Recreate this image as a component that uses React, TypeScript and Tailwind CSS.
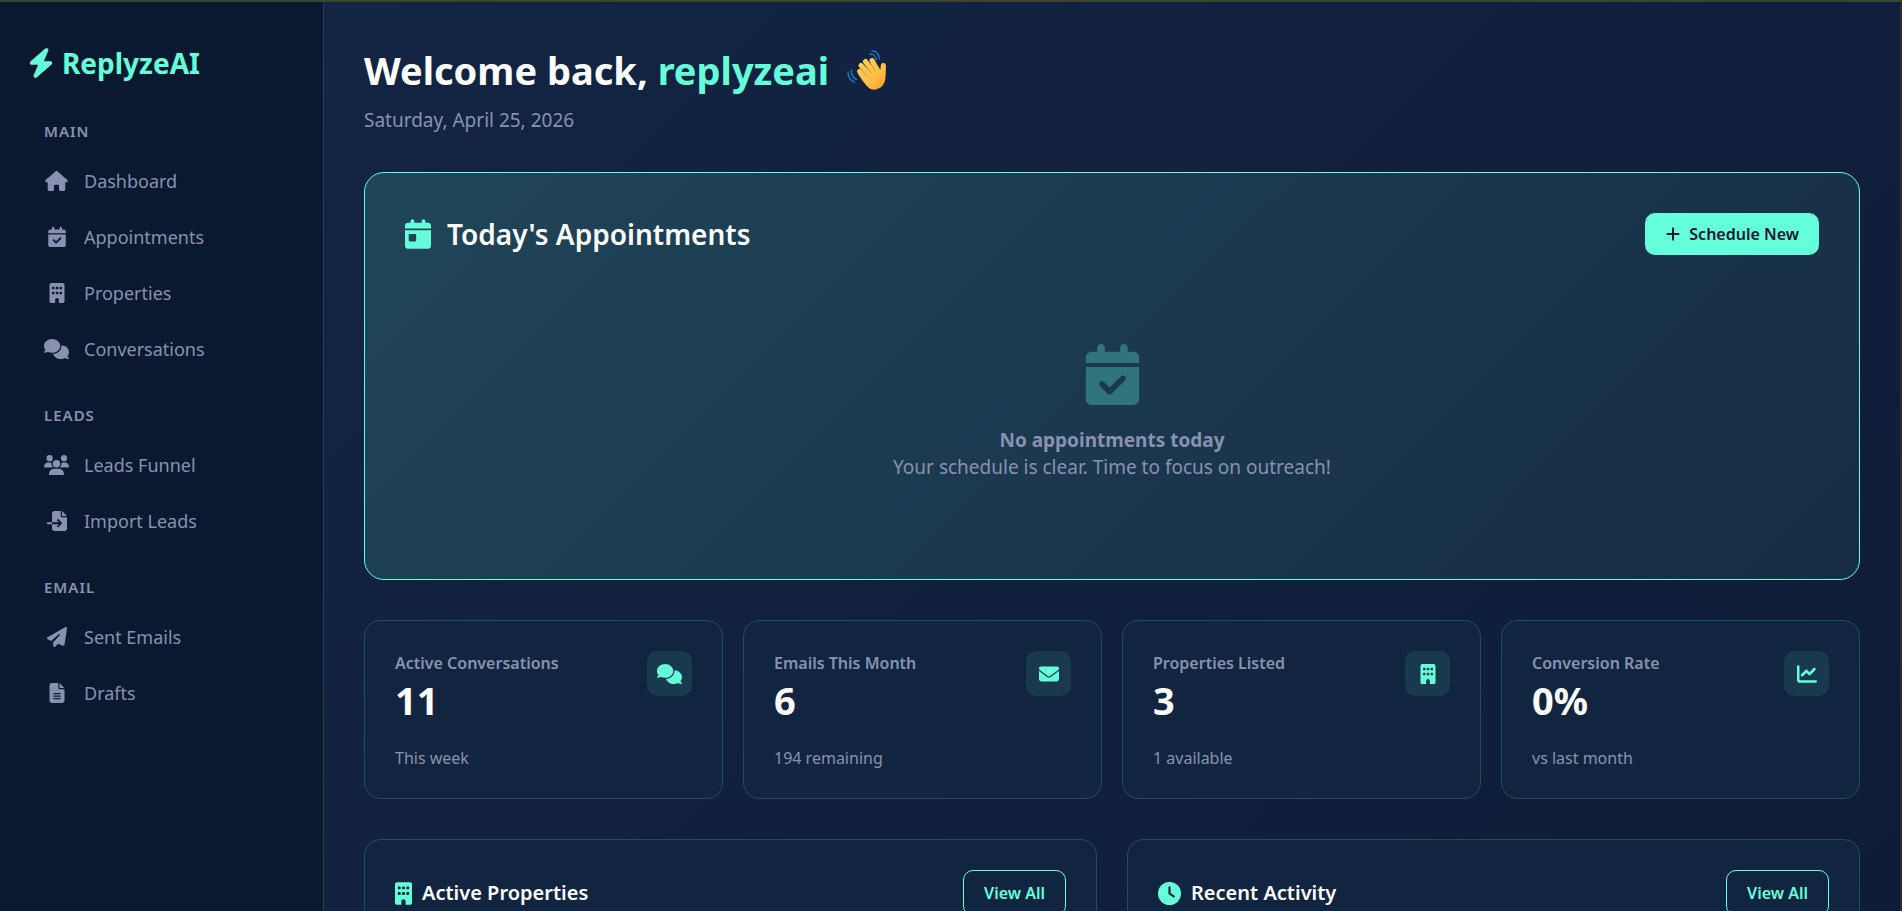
import { ReactNode } from "react";
import {
  FaBolt, FaBuilding, FaCalendarCheck, FaCalendarDay, FaChartLine, FaClock, FaComments,
  FaEnvelope, FaFileImport, FaFileLines, FaHouse, FaPaperPlane, FaPlus, FaUsers,
} from "react-icons/fa6";

type NavItem = { label: string; icon: ReactNode };
type NavGroup = { title: string; items: NavItem[] };

const navGroups: NavGroup[] = [
  {
    title: "MAIN",
    items: [
      { label: "Dashboard", icon: <FaHouse className="w-[23px]" /> },
      { label: "Appointments", icon: <FaCalendarCheck /> },
      { label: "Properties", icon: <FaBuilding /> },
      { label: "Conversations", icon: <FaComments className="w-[25px]" /> },
    ],
  },
  {
    title: "LEADS",
    items: [
      { label: "Leads Funnel", icon: <FaUsers className="w-[25px]" /> },
      { label: "Import Leads", icon: <FaFileImport /> },
    ],
  },
  {
    title: "EMAIL",
    items: [
      { label: "Sent Emails", icon: <FaPaperPlane /> },
      { label: "Drafts", icon: <FaFileLines /> },
    ],
  },
];

const stats = [
  { label: "Active Conversations", value: "11", note: "This week", icon: <FaComments className="w-[25px]" /> },
  { label: "Emails This Month", value: "6", note: "194 remaining", icon: <FaEnvelope /> },
  { label: "Properties Listed", value: "3", note: "1 available", icon: <FaBuilding /> },
  { label: "Conversion Rate", value: "0%", note: "vs last month", icon: <FaChartLine /> },
];

const WavingHand = () => (
  <svg viewBox="0 0 40 40" className="size-10" role="img" aria-label="Waving hand">
    <defs>
      <linearGradient id="hand" x1="0" y1="0" x2="40" y2="40" gradientUnits="userSpaceOnUse">
        <stop offset="0.3" stopColor="#ffcf5c" />
        <stop offset="0.7" stopColor="#ffbe42" />
        <stop offset="1" stopColor="#f0962c" />
      </linearGradient>
    </defs>
    <g stroke="url(#hand)" strokeWidth="5" strokeLinecap="round" fill="none">
      <path d="M12.500 21.500 20 29" />
      <path d="M14 15.500 24 26" />
      <path d="M18.500 11.500 27 23" />
      <path d="M25 10.500 31 21" />
      <path d="M36.300 15.500 35.500 27" />
    </g>
    <path d="M14 23 26 14 31.500 20.500C33.200 21.500 34 19 34.300 16L38.700 16C38.500 20 39 24 38.300 29 37.500 36 31.500 40.500 25 39.500 20 38 16 31 11 24Z" fill="url(#hand)" />
    <g stroke="#e58a25" strokeWidth="0.800" strokeLinecap="round" fill="none">
      <path d="M15 20.500 20 26" />
      <path d="M18.500 15.500 23.500 22.500" />
      <path d="M23 12.500 28 20.500" />
    </g>
    <g stroke="#1d78c1" strokeWidth="1.400" strokeLinecap="round" fill="none">
      <path d="M25 1C29.500 1 32 4.500 32.300 9" />
      <path d="M23 4C26.500 4 29 6.500 29.300 10" />
      <path d="M4.500 20C4 25 6 28 9.500 29.500" />
      <path d="M1 22C1 27 3 30.500 7.500 32" />
    </g>
  </svg>
);

const Sidebar = () => (
  <aside className="w-[324px] shrink-0 border-r border-[#214152] bg-[#0a192f] px-7">
    <a href="#" className="mt-[39px] flex items-center gap-2 text-[28px] leading-[44px] font-bold text-[#64ffda]">
      <FaBolt className="w-[26px] text-[30px]" /> ReplyzeAI
    </a>
    <nav className="mt-9 flex flex-col gap-7">
      {navGroups.map((group) => (
        <div key={group.title}>
          <h2 className="px-4 text-[15px] leading-5 font-semibold tracking-[1px]">{group.title}</h2>
          <ul className="mt-3">
            {group.items.map((item) => (
              <li key={item.label}>
                <a href="#" className="flex h-14 items-center gap-[15px] px-4 text-lg">
                  <span className="flex w-[25px] justify-center text-xl">{item.icon}</span>
                  {item.label}
                </a>
              </li>
            ))}
          </ul>
        </div>
      ))}
    </nav>
  </aside>
);

const StatCard = ({ label, value, note, icon }: (typeof stats)[number]) => (
  <article className="flex items-start justify-between rounded-2xl border border-[#214a5c] bg-[#112540] px-[30px] pt-[30px] pb-7">
    <div>
      <h3 className="text-base leading-6 font-semibold">{label}</h3>
      <p className="text-[38px] leading-[51px] font-bold text-white">{value}</p>
      <p className="mt-5 text-base leading-6">{note}</p>
    </div>
    <span className="flex size-[45px] items-center justify-center rounded-[10px] bg-[#19394e] text-xl text-[#64ffda]">
      {icon}
    </span>
  </article>
);

const Panel = ({ title, icon }: { title: string; icon: ReactNode }) => (
  <section className="h-80 rounded-2xl border border-[#214a5c] bg-[#112540] p-[30px]">
    <div className="flex items-center justify-between">
      <h2 className="flex items-center gap-[10px] text-xl font-semibold text-white">
        <span className="text-[23px] text-[#64ffda]">{icon}</span>
        {title}
      </h2>
      <button className="h-[46px] rounded-[10px] border border-[#64ffda] px-5 text-base font-semibold text-[#64ffda]">View All</button>
    </div>
  </section>
);

export default function App() {
  return (
    <div className="flex h-screen overflow-hidden border-t-2 border-r-2 border-t-[#3a4530] border-r-[#2c2c2e] bg-linear-135 from-[#142645] to-[#0e1c37] font-['Noto_Sans',sans-serif] text-[#8892b0]">
      <Sidebar />
      <main className="min-w-0 flex-1 px-10 pt-[39px]">
        <header>
          <h1 className="flex items-center gap-[18px] text-[38px] leading-[58px] font-bold text-white">
            <span>Welcome back, <span className="text-[#64ffda]">replyzeai</span></span>
            <WavingHand />
          </h1>
          <p className="mt-2 text-[19px] leading-[27px]">Saturday, April 25, 2026</p>
        </header>

        <section className="mt-[38px] rounded-[20px] border border-[#64ffda] bg-linear-135 from-[#204559] to-[#162c45] px-10 pt-10 pb-[98px]">
          <div className="flex items-center justify-between">
            <h2 className="flex items-center gap-4 text-[28px] leading-[42px] font-semibold text-white">
              <FaCalendarDay className="w-[26px] text-[30px] text-[#64ffda]" />
              Today's Appointments
            </h2>
            <button className="flex h-[42px] items-center gap-2 rounded-[10px] bg-[#64ffda] px-5 text-base font-semibold text-[#0a192f]">
              <FaPlus /> Schedule New
            </button>
          </div>
          <div className="mt-[89px] flex flex-col items-center text-[19px] leading-[27px]">
            <FaCalendarCheck className="text-[61px] text-[#2f757b]" />
            <strong className="mt-[22px]">No appointments today</strong>
            <p>Your schedule is clear. Time to focus on outreach!</p>
          </div>
        </section>

        <section className="mt-10 grid grid-cols-4 gap-5">
          {stats.map((stat) => (
            <StatCard key={stat.label} {...stat} />
          ))}
        </section>

        <div className="mt-10 grid grid-cols-2 gap-[30px]">
          <Panel title="Active Properties" icon={<FaBuilding className="w-[17px]" />} />
          <Panel title="Recent Activity" icon={<FaClock />} />
        </div>
      </main>
    </div>
  );
}
